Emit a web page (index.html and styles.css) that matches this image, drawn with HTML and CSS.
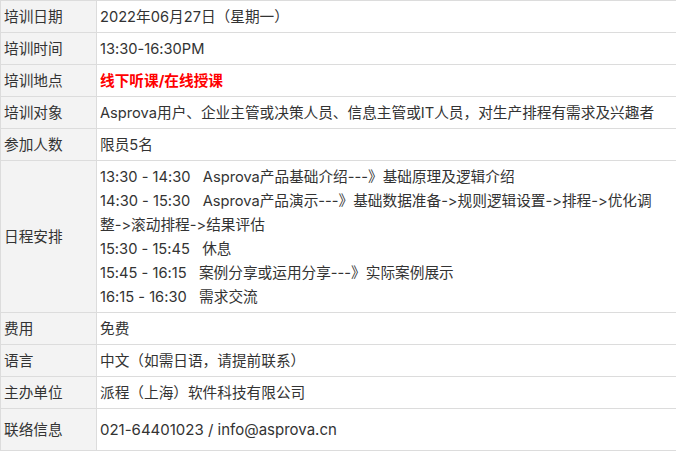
FILE: index.html
```html
<!DOCTYPE html>
<html lang="zh-CN">
<head>
  <meta charset="UTF-8">
  <meta name="viewport" content="width=device-width, initial-scale=1.0">
  <title>培训信息</title>
  <link rel="stylesheet" href="styles.css">
</head>
<body>
  <table class="info">
    <tr>
      <td class="label">培训日期</td>
      <td class="value">2022年06月27日（星期一）</td>
    </tr>
    <tr>
      <td class="label">培训时间</td>
      <td class="value">13:30-16:30PM</td>
    </tr>
    <tr>
      <td class="label">培训地点</td>
      <td class="value"><span class="red">线下听课/在线授课</span></td>
    </tr>
    <tr>
      <td class="label">培训对象</td>
      <td class="value">Asprova用户、企业主管或决策人员、信息主管或IT人员，对生产排程有需求及兴趣者</td>
    </tr>
    <tr>
      <td class="label">参加人数</td>
      <td class="value">限员5名</td>
    </tr>
    <tr>
      <td class="label">日程安排</td>
      <td class="value">
        13:30 - 14:30&nbsp;&nbsp;&nbsp;Asprova产品基础介绍---》基础原理及逻辑介绍<br>
        14:30 - 15:30&nbsp;&nbsp;&nbsp;Asprova产品演示---》基础数据准备-&gt;规则逻辑设置-&gt;排程-&gt;优化调整-&gt;滚动排程-&gt;结果评估<br>
        15:30 - 15:45&nbsp;&nbsp;&nbsp;休息<br>
        15:45 - 16:15&nbsp;&nbsp;&nbsp;案例分享或运用分享---》实际案例展示<br>
        16:15 - 16:30&nbsp;&nbsp;&nbsp;需求交流
      </td>
    </tr>
    <tr>
      <td class="label">费用</td>
      <td class="value">免费</td>
    </tr>
    <tr>
      <td class="label">语言</td>
      <td class="value">中文（如需日语，请提前联系）</td>
    </tr>
    <tr>
      <td class="label">主办单位</td>
      <td class="value">派程（上海）软件科技有限公司</td>
    </tr>
    <tr class="big">
      <td class="label">联络信息</td>
      <td class="value">021-64401023 / info@asprova.cn</td>
    </tr>
  </table>
</body>
</html>
```

FILE: styles.css
```css
body {
  margin: 0;
  font-family: Inter, "Noto Sans CJK SC", sans-serif;
  font-feature-settings: "calt" 0, "liga" 0;
  font-variant-ligatures: none;
  color: #333;
  background: #fff;
}
.info {
  width: 100%;
  border-collapse: collapse;
  font-size: 11pt;
}
.info td {
  border: 1px solid #dcdcdc;
  padding: 4px 3px 3px;
  line-height: 24px;
  vertical-align: middle;
}
.label {
  width: 89px;
  background-color: #f3f3f3;
  border-left: none;
}
.value {
  border-right: none !important;
}
.red {
  color: #f00;
  font-weight: bold;
}
.big td {
  line-height: 34px;
}
.big .value {
  font-size: 15px;
}
```
